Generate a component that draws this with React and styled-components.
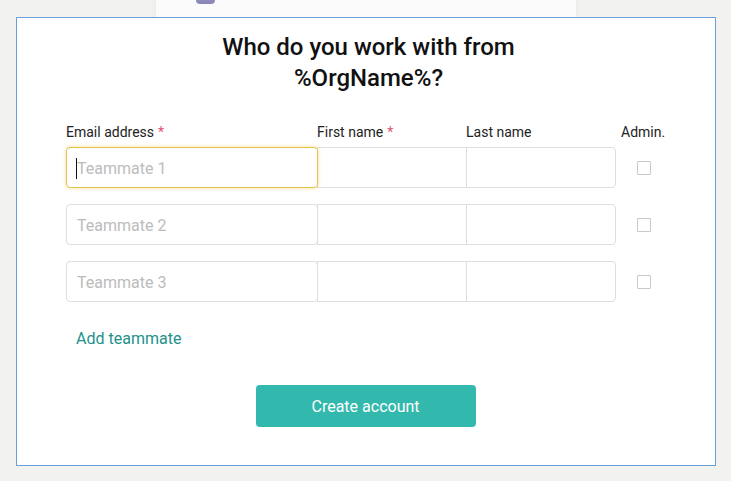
import React from "react";
import styled, { createGlobalStyle } from "styled-components";

const Global = createGlobalStyle`
  html, body { margin: 0; padding: 0; background: #f2f2f1; }
  body { font-family: Roboto, "Noto Sans", Arial, sans-serif; }
  * { box-sizing: border-box; }
`;

const Page = styled.div`
  width: 731px;
  height: 481px;
  overflow: hidden;
  display: flex;
  flex-direction: column;
  align-items: flex-start;
`;

const TopCard = styled.div`
  width: 420px;
  height: 17px;
  margin-left: 156px;
  background: #fbfbfb;
  box-shadow: 0 0 6px rgba(0, 0, 0, 0.06);
  overflow: hidden;
  display: flex;
  align-items: flex-end;
`;

const TopRow = styled.div`
  display: flex;
  align-items: flex-end;
  gap: 14px;
  padding-left: 40px;
  margin-bottom: 16px;
`;

const TopIcon = styled.div`
  width: 19px;
  height: 20px;
  border-radius: 4px;
  background: linear-gradient(180deg, #9d99cc, #8a86b8);
  margin-bottom: -3px;
`;

const TopText = styled.span`
  font-size: 15px;
  line-height: 18px;
  color: #333;
  white-space: nowrap;
`;

const Panel = styled.section`
  width: 700px;
  height: 449px;
  margin-left: 16px;
  background: #fff;
  border: 1px solid #6b9fd9;
  padding: 14px 44px 0 49px;
  display: flex;
  flex-direction: column;
  align-items: stretch;
`;

const Title = styled.h1`
  margin: 0 auto;
  width: 320px;
  text-align: center;
  font-size: 24px;
  line-height: 31px;
  font-weight: 500;
  color: #111;
`;

const Form = styled.div`
  margin-top: 28px;
  display: flex;
  flex-direction: column;
`;

const Grid = styled.div`
  display: grid;
  grid-template-columns: 251px 149px 150px 55px;
`;

const Label = styled.label`
  font-size: 14px;
  line-height: 20px;
  color: #222;
  padding-left: ${(p) => (p.$pad ? p.$pad : 0)}px;
  margin-bottom: 5px;
`;

const Req = styled.span`
  color: #e0566d;
  margin-left: 4px;
`;

const Rows = styled.div`
  display: flex;
  flex-direction: column;
  gap: 16px;
`;

const Row = styled.div`
  display: flex;
  align-items: center;
`;

const Cells = styled.div`
  display: flex;
  width: 550px;
`;

const Cell = styled.div`
  position: relative;
  width: ${(p) => p.$w}px;
  height: 41px;
  margin-left: ${(p) => (p.$first ? 0 : -1)}px;
  border: 1px solid ${(p) => (p.$focus ? "#e5c24e" : "#dedede")};
  border-radius: ${(p) => p.$radius};
  box-shadow: ${(p) => (p.$focus ? "0 0 4px rgba(236, 200, 80, 0.55)" : "none")};
  z-index: ${(p) => (p.$focus ? 1 : 0)};
  display: flex;
  align-items: center;
  padding-left: 10px;
  padding-top: 1px;
  font-size: 16px;
  color: #bcbcbc;
  background: #fff;
`;

const Caret = styled.span`
  position: absolute;
  left: 9px;
  top: 10px;
  width: 1px;
  height: 21px;
  background: #111;
`;

const CheckCell = styled.div`
  width: 55px;
  display: flex;
  justify-content: center;
  padding-left: 1px;
`;

const Check = styled.span`
  width: 14px;
  height: 14px;
  border: 1px solid #c9c9c9;
  border-radius: 1px;
  background: #fff;
`;

const AddLink = styled.a`
  margin-top: 25px;
  padding-left: 10px;
  font-size: 16px;
  line-height: 24px;
  color: #23918a;
  text-decoration: none;
  align-self: flex-start;
`;

const Submit = styled.button`
  margin: 34px auto 0;
  width: 220px;
  height: 42px;
  border: none;
  border-radius: 4px;
  background: #33b8ad;
  color: #fff;
  font-family: Roboto, "Noto Sans", Arial, sans-serif;
  font-size: 16px;
  position: relative;
  left: -3px;
`;

const rows = [1, 2, 3];

export default function App() {
  return (
    <Page>
      <Global />
      <TopCard>
        <TopRow>
          <TopIcon />
          <TopText>Sign in quickly and get going right away</TopText>
        </TopRow>
      </TopCard>
      <Panel>
        <Title>Who do you work with from %OrgName%?</Title>
        <Form>
          <Grid>
            <Label>
              Email address<Req>*</Req>
            </Label>
            <Label>
              First name<Req>*</Req>
            </Label>
            <Label>Last name</Label>
            <Label $pad={5}>Admin.</Label>
          </Grid>
          <Rows>
            {rows.map((n) => (
              <Row key={n}>
                <Cells>
                  <Cell $first $w={252} $radius="4px" $focus={n === 1}>
                    {n === 1 && <Caret />}
                    Teammate {n}
                  </Cell>
                  <Cell $w={150} $radius="0" />
                  <Cell $w={150} $radius="0 4px 4px 0" />
                </Cells>
                <CheckCell>
                  <Check />
                </CheckCell>
              </Row>
            ))}
          </Rows>
          <AddLink href="#">Add teammate</AddLink>
        </Form>
        <Submit>Create account</Submit>
      </Panel>
    </Page>
  );
}
